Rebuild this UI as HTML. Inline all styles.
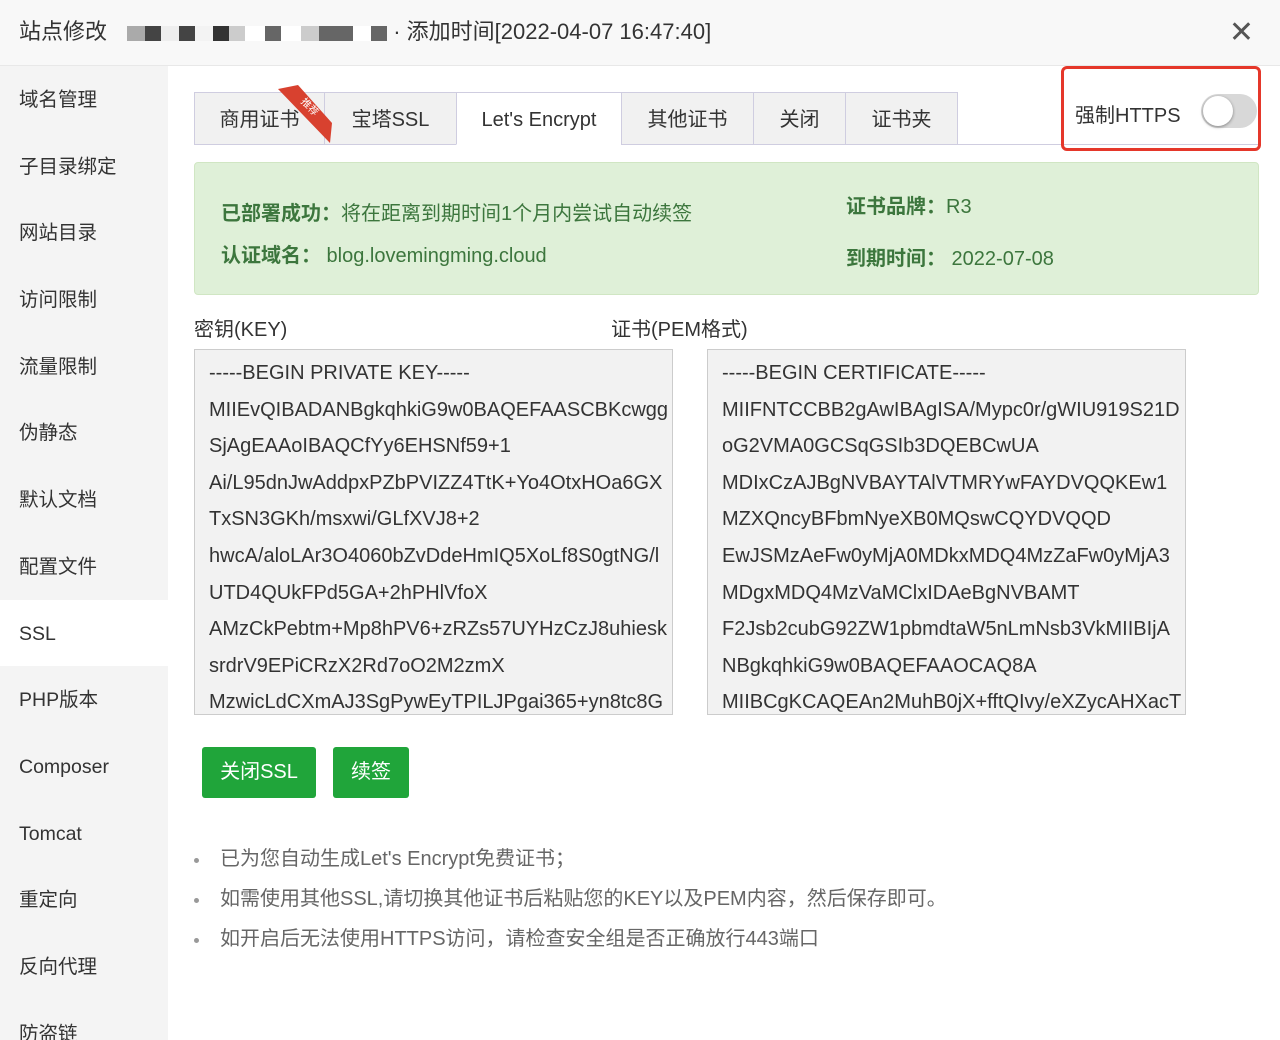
<!DOCTYPE html>
<html><head><meta charset="utf-8"><style>
*{margin:0;padding:0;box-sizing:border-box}
html,body{width:1280px;height:1040px;overflow:hidden}
body{background:#fff;font-family:"Liberation Sans","Noto Sans CJK SC",sans-serif;color:#333;position:relative}
.title{position:absolute;left:0;top:0;width:1280px;height:66px;background:#f8f8f8;border-bottom:1px solid #e8e8e8;font-size:22px;line-height:64px;padding-left:19px;color:#333;white-space:nowrap}
.close{position:absolute;right:26px;top:18px;font-size:30px;line-height:30px;color:#555}
.blk{display:inline-block;height:15px;vertical-align:middle}
.side{position:absolute;left:0;top:66px;width:168px;height:974px;background:#f4f4f4}
.side div{height:66.7px;line-height:68px;padding-left:19px;font-size:19.5px;color:#333}
.side .on{background:#fff}
.tabs{position:absolute;left:194px;top:92px;height:53px;width:1064px;border-bottom:1px solid #cfcde0}
.tab{position:absolute;top:0;height:53px;border:1px solid #cfcde0;background:#f1f1f1;font-size:20px;text-align:center;line-height:54px;color:#333}
.tab.on{background:#fff;border-bottom-color:#fff}
.green{position:absolute;left:194px;top:162px;width:1065px;height:133px;background:#dff0d8;border:1px solid #d0e6c3;border-radius:4px;color:#3c763d;font-size:20px}
.green span{position:absolute;white-space:nowrap}
b{font-weight:bold}
.lbl{position:absolute;font-size:20px;color:#333;top:313px}
.ta{position:absolute;top:349px;width:479px;height:366px;border:1px solid #ccc;background:#f2f2f2;font-size:20px;padding:5px 0 0 14px;line-height:36.6px;white-space:nowrap;overflow:hidden;color:#333}
.btn{position:absolute;top:747px;height:51px;background:#20a53a;color:#fff;font-size:20px;line-height:51px;text-align:center;border-radius:3px}
ul{position:absolute;left:220px;top:845px;font-size:20px;color:#666;list-style:none;white-space:nowrap}
ul li{height:40px;line-height:28px;position:relative}
ul li:before{content:"";position:absolute;left:-26px;top:13px;width:5px;height:5px;border-radius:50%;background:#999}
</style></head><body>
<div class="title">站点修改 <span class="blk" style="width:18px;background:#aaa;margin-left:14px"></span><span class="blk" style="width:16px;background:#444"></span><span class="blk" style="width:18px;background:#eee"></span><span class="blk" style="width:16px;background:#444"></span><span class="blk" style="width:18px;background:#f3f3f3"></span><span class="blk" style="width:16px;background:#333"></span><span class="blk" style="width:16px;background:#ccc"></span><span class="blk" style="width:20px;background:#fff"></span><span class="blk" style="width:16px;background:#666"></span><span class="blk" style="width:20px;background:#fff"></span><span class="blk" style="width:18px;background:#ccc"></span><span class="blk" style="width:34px;background:#666"></span><span class="blk" style="width:18px;background:#fff"></span><span class="blk" style="width:16px;background:#666"></span> · 添加时间[2022-04-07 16:47:40]<span class="close">✕</span></div>
<div class="side">
<div>域名管理</div><div>子目录绑定</div><div>网站目录</div><div>访问限制</div><div>流量限制</div><div>伪静态</div><div>默认文档</div><div>配置文件</div><div class="on">SSL</div><div>PHP版本</div><div>Composer</div><div>Tomcat</div><div>重定向</div><div>反向代理</div><div>防盗链</div>
</div>
<div class="tabs">
<div class="tab" style="left:0;width:131px">商用证书</div>
<div class="tab" style="left:130px;width:133px">宝塔SSL</div>
<div class="tab on" style="left:262px;width:166px">Let's Encrypt</div>
<div class="tab" style="left:427px;width:133px">其他证书</div>
<div class="tab" style="left:559px;width:93px">关闭</div>
<div class="tab" style="left:651px;width:113px">证书夹</div>
</div>
<svg style="position:absolute;left:276px;top:85px" width="58" height="60"><polygon points="2,4 22,0 56,38 54,58" fill="#d8412f"/><text x="24" y="22" font-size="10" fill="#fff" transform="rotate(45 30 20)" font-family="Noto Sans CJK SC">推荐</text></svg>
<div style="position:absolute;left:1061px;top:66px;width:200px;height:85px;border:3px solid #e5372a;border-radius:6px"></div>
<div style="position:absolute;left:1075px;top:99px;font-size:20px;color:#333">强制HTTPS</div>
<div style="position:absolute;left:1201px;top:94px;width:56px;height:34px;border-radius:17px;background:#d8d8d8"><div style="position:absolute;left:2px;top:2px;width:30px;height:30px;border-radius:50%;background:#fff;box-shadow:0 1px 3px rgba(0,0,0,.4)"></div></div>
<div class="green">
<span style="left:26px;top:34px"><b>已部署成功：</b>将在距离到期时间1个月内尝试自动续签</span>
<span style="left:26px;top:76px"><b>认证域名：</b> blog.lovemingming.cloud</span>
<span style="left:651px;top:27px"><b>证书品牌：</b>R3</span>
<span style="left:651px;top:79px"><b>到期时间：</b> 2022-07-08</span>
</div>
<div class="lbl" style="left:194px">密钥(KEY)</div>
<div class="lbl" style="left:611px">证书(PEM格式)</div>
<div class="ta" style="left:194px">-----BEGIN PRIVATE KEY-----<br>MIIEvQIBADANBgkqhkiG9w0BAQEFAASCBKcwgg<br>SjAgEAAoIBAQCfYy6EHSNf59+1<br>Ai/L95dnJwAddpxPZbPVIZZ4TtK+Yo4OtxHOa6GX<br>TxSN3GKh/msxwi/GLfXVJ8+2<br>hwcA/aloLAr3O4060bZvDdeHmIQ5XoLf8S0gtNG/l<br>UTD4QUkFPd5GA+2hPHlVfoX<br>AMzCkPebtm+Mp8hPV6+zRZs57UYHzCzJ8uhiesk<br>srdrV9EPiCRzX2Rd7oO2M2zmX<br>MzwicLdCXmAJ3SgPywEyTPILJPgai365+yn8tc8G</div>
<div class="ta" style="left:707px">-----BEGIN CERTIFICATE-----<br>MIIFNTCCBB2gAwIBAgISA/Mypc0r/gWIU919S21D<br>oG2VMA0GCSqGSIb3DQEBCwUA<br>MDIxCzAJBgNVBAYTAlVTMRYwFAYDVQQKEw1<br>MZXQncyBFbmNyeXB0MQswCQYDVQQD<br>EwJSMzAeFw0yMjA0MDkxMDQ4MzZaFw0yMjA3<br>MDgxMDQ4MzVaMClxIDAeBgNVBAMT<br>F2Jsb2cubG92ZW1pbmdtaW5nLmNsb3VkMIIBIjA<br>NBgkqhkiG9w0BAQEFAAOCAQ8A<br>MIIBCgKCAQEAn2MuhB0jX+fftQIvy/eXZycAHXacT</div>
<div class="btn" style="left:202px;width:114px">关闭SSL</div>
<div class="btn" style="left:333px;width:76px">续签</div>
<ul>
<li>已为您自动生成Let's Encrypt免费证书；</li>
<li>如需使用其他SSL,请切换其他证书后粘贴您的KEY以及PEM内容，然后保存即可。</li>
<li>如开启后无法使用HTTPS访问，请检查安全组是否正确放行443端口</li>
</ul>
</body></html>
